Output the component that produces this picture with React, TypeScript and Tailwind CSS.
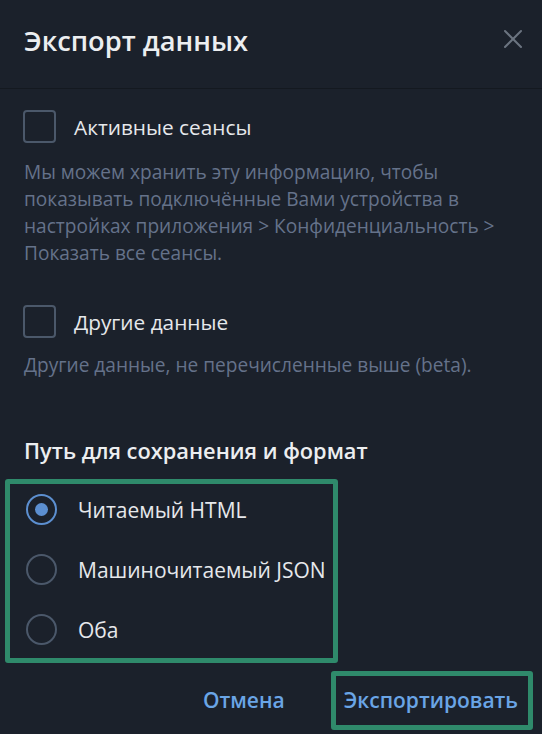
const font = { fontFamily: '"Open Sans", "Noto Sans", sans-serif' };

function Checkbox() {
  return <span className="block h-[33px] w-[33px] shrink-0 rounded-[4px] border-2 border-[#4b586a]" />;
}

function Radio({ checked }: { checked?: boolean }) {
  return (
    <span
      className={
        "flex h-[31px] w-[31px] shrink-0 items-center justify-center rounded-full border-2 " +
        (checked ? "border-[#5c8fd0]" : "border-[#4b586a]")
      }
    >
      {checked ? <span className="block h-[13px] w-[13px] rounded-full bg-[#5c8fd0]" /> : null}
    </span>
  );
}

export default function App() {
  return (
    <div style={font} className="flex h-[734px] w-[542px] flex-col overflow-hidden bg-[#1b212b] text-[#e8eaed]">
      <header className="flex h-[89px] shrink-0 items-center justify-between border-b border-[#141920] pl-[24px] pr-[19px]">
        <h1 className="pb-[6px] text-[27.3px] font-semibold text-[#eceef0]">Экспорт данных</h1>
        <svg width="20" height="20" viewBox="0 0 20 20" className="mb-[10px]">
          <path d="M2 2 L18 18 M18 2 L2 18" stroke="#6b7480" strokeWidth="2" strokeLinecap="round" />
        </svg>
      </header>

      <section className="pl-[23px] pr-[10px] pt-[21px]">
        <div className="flex items-center gap-[18px]">
          <Checkbox />
          <span className="text-[20.8px] leading-[30px] text-[#e6e8eb]">Активные сеансы</span>
        </div>
        <p className="mt-[16px] pl-[1px] text-[19.1px] leading-[27px] text-[#65728a]">
          Мы можем хранить эту информацию, чтобы показывать подключённые Вами устройства в настройках приложения &gt; Конфиденциальность &gt; Показать все сеансы.
        </p>

        <div className="mt-[38px] flex items-center gap-[18px]">
          <Checkbox />
          <span className="text-[20.8px] leading-[30px] text-[#e6e8eb]">Другие данные</span>
        </div>
        <p className="mt-[14px] pl-[1px] text-[19.1px] leading-[27px] text-[#65728a]">
          Другие данные, не перечисленные выше (beta).
        </p>

        <h2 className="mt-[57px] pl-[1px] text-[21.8px] leading-[30px] font-semibold text-[#eceef0]">
          Путь для сохранения и формат
        </h2>
      </section>

      <div className="ml-[5px] mt-[13px] flex w-[333px] flex-col gap-[29px] rounded-[3px] border-[5px] border-[#2f8a6b] pb-[13px] pl-[16px] pt-[10px]">
        {[
          { label: "Читаемый HTML", checked: true },
          { label: "Машиночитаемый JSON" },
          { label: "Оба" },
        ].map((o) => (
          <div key={o.label} className="flex h-[31px] items-center gap-[21px]">
            <Radio checked={o.checked} />
            <span className="text-[21px] leading-[30px] text-[#e6e8eb]">{o.label}</span>
          </div>
        ))}
      </div>

      <footer className="mt-[8px] flex items-center justify-end gap-[46px] pr-[9px]">
        <button className="text-[21px] font-semibold text-[#6aa5e6]">Отмена</button>
        <button className="h-[59px] rounded-[3px] border-[5px] border-[#2f8a6b] pl-[8px] pr-[10px] text-[21px] font-semibold text-[#6aa5e6]">
          Экспортировать
        </button>
      </footer>
    </div>
  );
}
